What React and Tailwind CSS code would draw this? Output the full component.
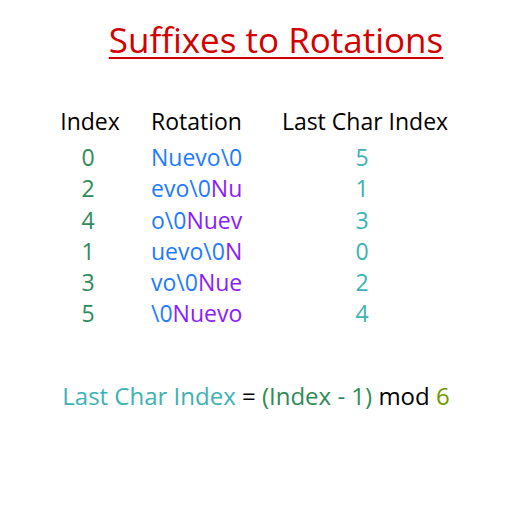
const rows = [
  { idx: "0", blue: "Nuevo\\0", purple: "", last: "5" },
  { idx: "2", blue: "evo\\0", purple: "Nu", last: "1" },
  { idx: "4", blue: "o\\0", purple: "Nuev", last: "3" },
  { idx: "1", blue: "uevo\\0", purple: "N", last: "0" },
  { idx: "3", blue: "vo\\0", purple: "Nue", last: "2" },
  { idx: "5", blue: "\\0", purple: "Nuevo", last: "4" },
];

export default function App() {
  return (
    <div
      className="w-[512px] h-[512px] bg-white flex flex-col"
      style={{ fontFamily: '"Open Sans", "Noto Sans", sans-serif' }}
    >
      <div className="flex justify-center pl-[40px] pt-[18px]">
        <h1 className="text-[35px] leading-[44px] text-[#d40000] underline decoration-[2px] underline-offset-[4px]">
          Suffixes to Rotations
        </h1>
      </div>

      <div className="flex flex-col mt-[44px] text-[23px]">
        <div className="flex leading-[30px] text-black">
          <div className="ml-[60px] w-[60px] text-center">Index</div>
          <div className="ml-[31px] w-[129px]">Rotation</div>
          <div className="w-[170px] text-center">Last Char Index</div>
        </div>
        <div className="flex flex-col mt-[6px]">
          {rows.map((r) => (
            <div key={r.idx} className="flex leading-[31.3px]">
              <div className="ml-[60px] w-[56px] text-center text-[#2e8b57]">{r.idx}</div>
              <div className="ml-[35px] w-[129px]">
                <span className="text-[#1e7bff]">{r.blue}</span>
                <span className="text-[#8a1cff]">{r.purple}</span>
              </div>
              <div className="w-[164px] text-center text-[#3cb2b4]">{r.last}</div>
            </div>
          ))}
        </div>
      </div>

      <div className="flex justify-center mt-[51px] text-[24px] leading-[30px]">
        <span className="text-[#3cb2b4]">Last Char Index</span>
        <span className="text-black whitespace-pre"> = </span>
        <span className="text-[#2e8b57]">(Index - 1)</span>
        <span className="text-black whitespace-pre"> mod </span>
        <span className="text-[#6b9a00]">6</span>
      </div>
    </div>
  );
}
